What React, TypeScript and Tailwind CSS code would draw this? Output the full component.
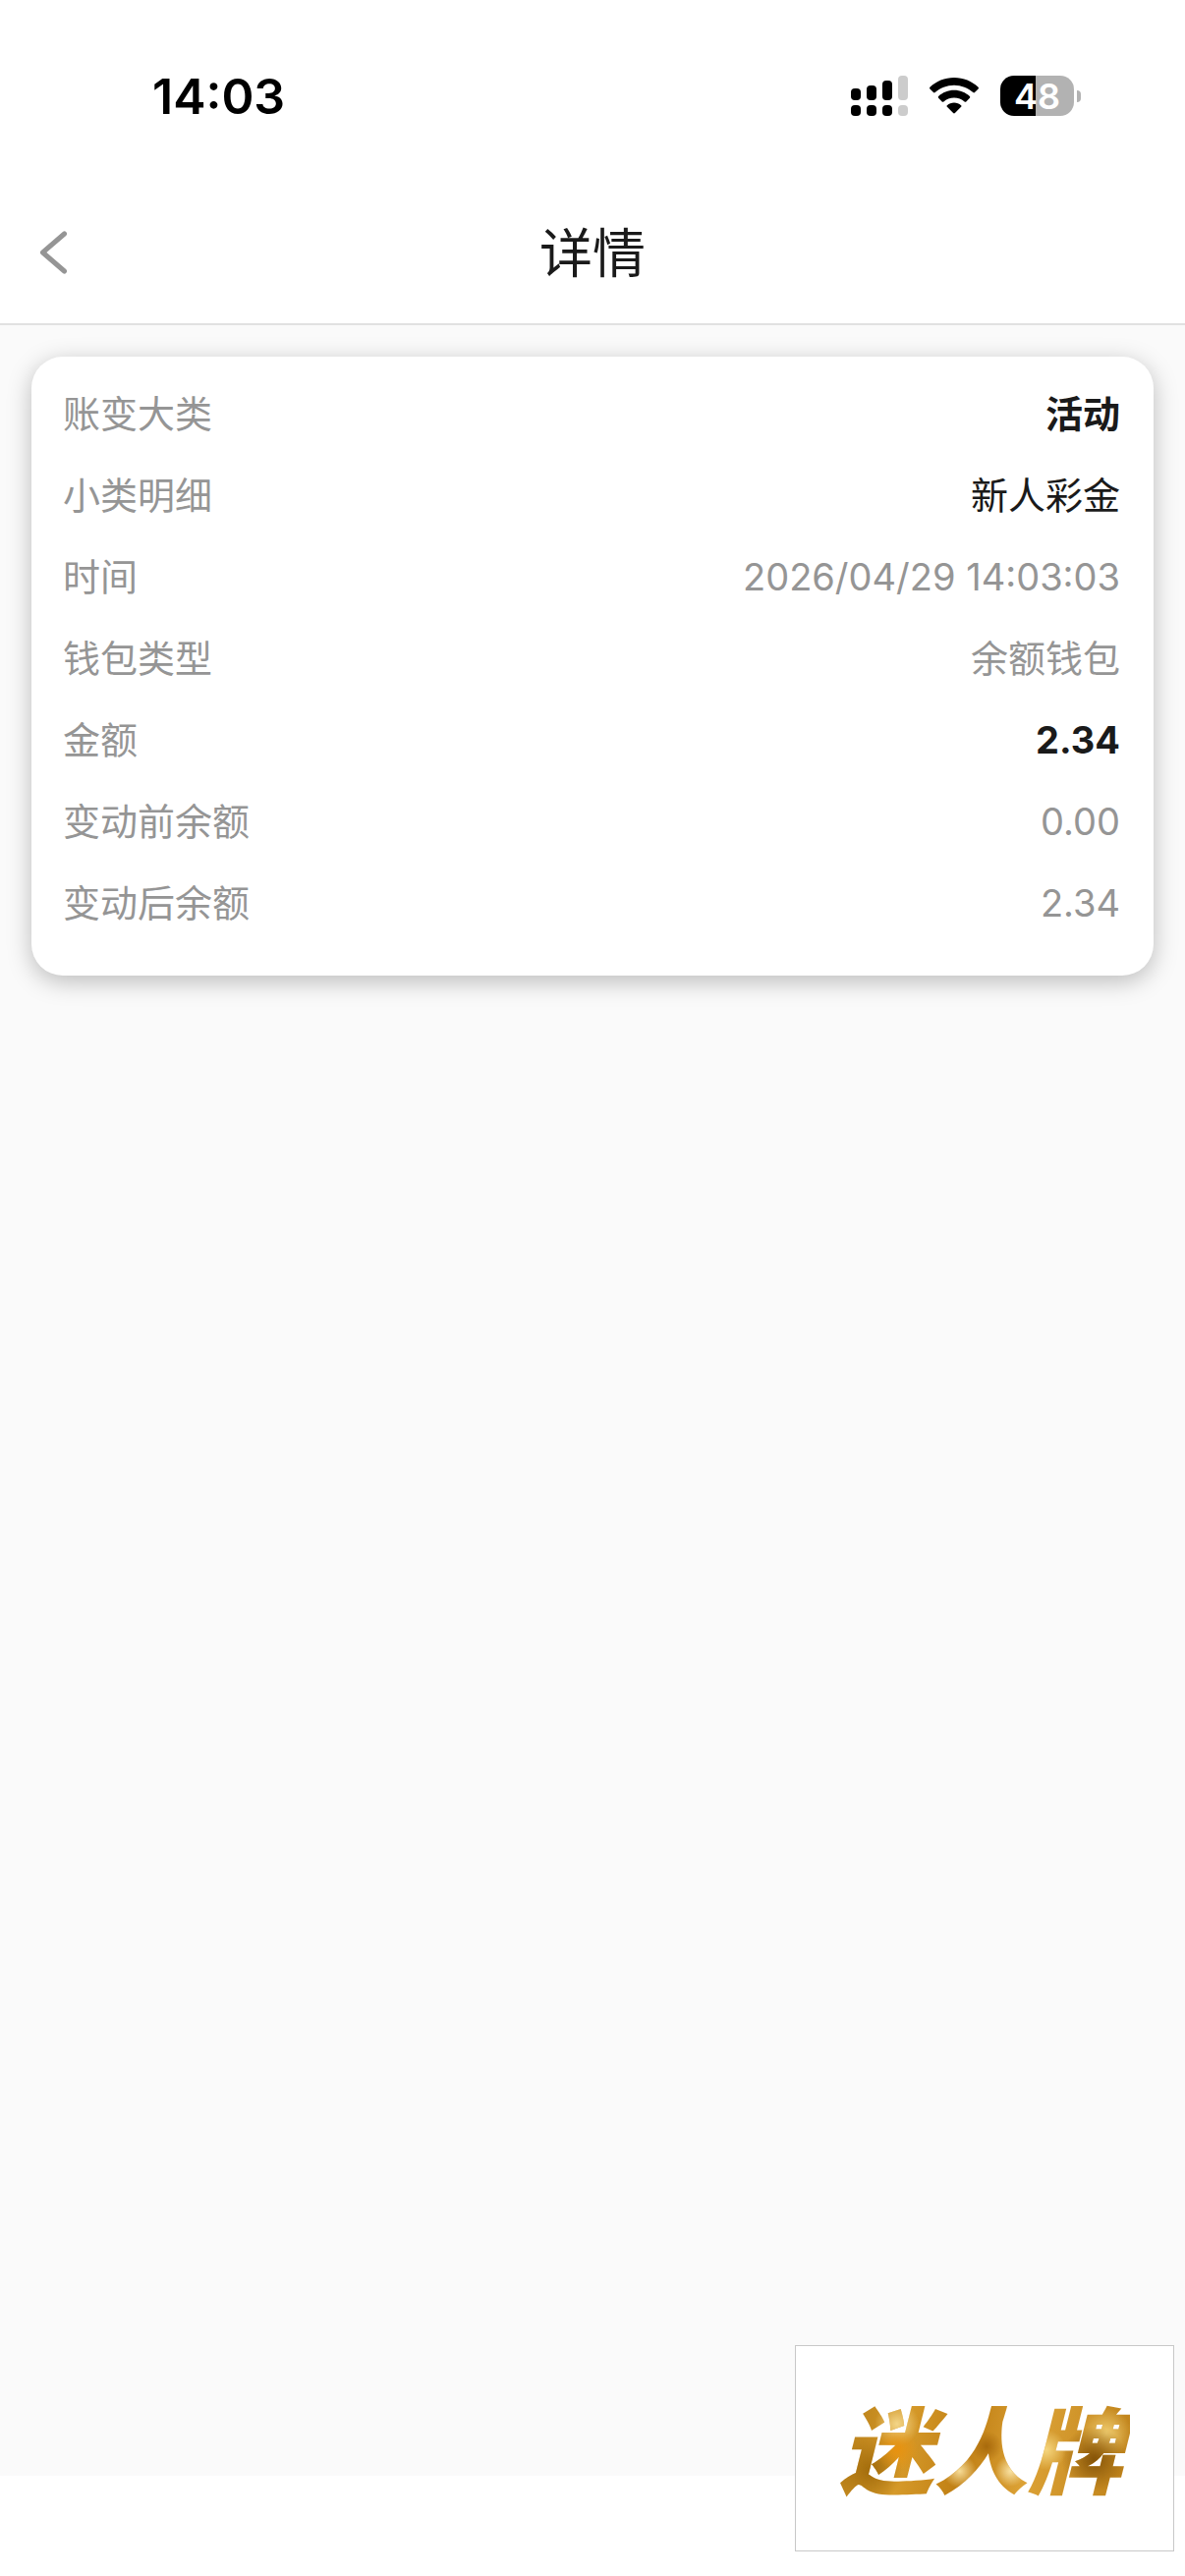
import React from "react";

interface DetailRow {
  label: string;
  value: string;
  tone?: 'muted' | 'dark' | 'strong';
}

const rows: DetailRow[] = [
  { label: '账变大类', value: '活动', tone: 'strong' },
  { label: '小类明细', value: '新人彩金', tone: 'dark' },
  { label: '时间', value: '2026/04/29 14:03:03' },
  { label: '钱包类型', value: '余额钱包' },
  { label: '金额', value: '2.34', tone: 'strong' },
  { label: '变动前余额', value: '0.00' },
  { label: '变动后余额', value: '2.34' },
];

const tones = {
  muted: 'text-[#959595]',
  dark: 'text-[#1a1a1a]',
  strong: 'font-bold text-[#1a1a1a]',
};

function SignalIcon() {
  return (
    <svg width="58" height="41" viewBox="0 0 58 41" aria-hidden="true">
      <rect x="0" y="13" width="10" height="12" rx="4" />
      <rect x="16" y="10" width="10" height="15" rx="4" />
      <rect x="32" y="5" width="10" height="20" rx="4" />
      <rect x="48" y="0" width="10" height="25" rx="4" fill="#cccccc" />
      <rect x="0" y="30" width="10" height="11" rx="4" />
      <rect x="16" y="30" width="10" height="11" rx="4" />
      <rect x="32" y="30" width="10" height="11" rx="4" />
      <rect x="48" y="30" width="10" height="11" rx="4" fill="#cccccc" />
    </svg>
  );
}

function WifiIcon() {
  return (
    <svg width="50" height="37" viewBox="0 0 50 37" aria-hidden="true">
      <path d="M25 0C15.500 0 6.800 3.700 0.400 9.700c-.5.500-.5 1.200 0 1.700l3.600 3.700c.5.500 1.200.500 1.700 0C10.800 10.500 17.600 7.700 25 7.700s14.200 2.800 19.300 7.400c.5.500 1.200.500 1.700 0l3.600-3.700c.5-.5.5-1.200 0-1.700C43.200 3.700 34.500 0 25 0Z" />
      <path d="M25 12.800c-6.100 0-11.700 2.400-15.900 6.200-.5.500-.5 1.200 0 1.700l3.600 3.700c.5.500 1.200.500 1.700 0 2.800-2.500 6.500-4 10.600-4s7.800 1.500 10.600 4c.5.500 1.200.500 1.700 0l3.600-3.700c.5-.5.5-1.200 0-1.700-4.200-3.800-9.800-6.200-15.900-6.200Z" />
      <path d="M25 25.500c-2.700 0-5.200 1-7.100 2.700-.5.400-.5 1.200 0 1.600l6.200 6.300c.5.500 1.300.500 1.800 0l6.200-6.300c.5-.4.5-1.200 0-1.600-1.900-1.700-4.400-2.700-7.100-2.700Z" />
    </svg>
  );
}

function Battery() {
  return (
    <div className="flex items-center gap-[3px]">
      <div className="flex h-[41px] w-[75px] items-center justify-center rounded-[14px] bg-[linear-gradient(to_right,#000_48%,#b2b2b2_48%)] text-[36px] leading-none font-semibold text-white">
        48
      </div>
      <div className="h-3 w-1 rounded-r-full bg-[#b2b2b2]" />
    </div>
  );
}

function StatusBar() {
  return (
    <div className="flex h-[184px] items-start justify-between pt-[72px] pr-[106px] pl-[155px]">
      <span className="text-[50px] leading-[52px] font-semibold text-black">14:03</span>
      <div className="flex items-center gap-[22px] pt-[5px]">
        <SignalIcon />
        <WifiIcon />
        <Battery />
      </div>
    </div>
  );
}

export default function App() {
  return (
    <div className="flex min-h-screen flex-col bg-white font-['Inter','Noto_Sans_CJK_SC',sans-serif]">
      <StatusBar />

      <header className="grid h-[147px] grid-cols-[1fr_auto_1fr] items-center border-b-2 border-[#e1e1e1] px-8">
        <button type="button" aria-label="返回" className="flex h-16 w-16 items-center pl-2">
          <svg width="30" height="44" viewBox="0 0 30 44" fill="none" stroke="#959595" strokeWidth="5" strokeLinecap="round" strokeLinejoin="round">
            <path d="M25.500 3 3.500 22l22 19" />
          </svg>
        </button>
        <h1 className="pt-1 text-[54px] leading-[72px] text-[#1a1a1a]">详情</h1>
      </header>

      <main className="flex-1 bg-[#fafafa] p-8">
        <dl className="rounded-[32px] bg-white pt-4 pr-[34px] pb-[33px] pl-8 shadow-[0_6px_24px_rgba(0,0,0,0.25)]">
          {rows.map(row => (
            <div key={row.label} className="flex h-[83px] items-center justify-between text-[38px] leading-[56px]">
              <dt className="text-[#959595]">{row.label}</dt>
              <dd className={tones[row.tone ?? 'muted']}>{row.value}</dd>
            </div>
          ))}
        </dl>
      </main>

      <div className="h-[102px]" />

      {/* Marca flutuante */}
      <div className="fixed right-[11px] bottom-[25px] flex h-[210px] w-[386px] items-center justify-center border border-[#c8c8c8] bg-white pt-2 pr-2">
        <span className="bg-[radial-gradient(circle_at_22%_48%,#e8920f_0,transparent_9%),radial-gradient(circle_at_22%_26%,#f3d588_0,transparent_9%),radial-gradient(circle_at_13%_65%,#a26c0c_0,transparent_12%),radial-gradient(circle_at_43%_66%,#f6dc98_0,transparent_9%),radial-gradient(circle_at_52%_45%,#a86a0c_0,transparent_9%),radial-gradient(circle_at_60%_66%,#f8e2a4_0,transparent_8%),radial-gradient(circle_at_72%_48%,#f5d67e_0,transparent_9%),radial-gradient(circle_at_88%_56%,#855408_0,transparent_12%),radial-gradient(circle_at_92%_34%,#f0cd70_0,transparent_9%),linear-gradient(100deg,#b07814_0%,#d69a2a_25%,#c07f14_45%,#dca236_65%,#bd8018_100%)] bg-clip-text px-2 text-[96px] leading-[120px] font-black text-transparent italic">
          迷人牌
        </span>
      </div>
    </div>
  );
}
